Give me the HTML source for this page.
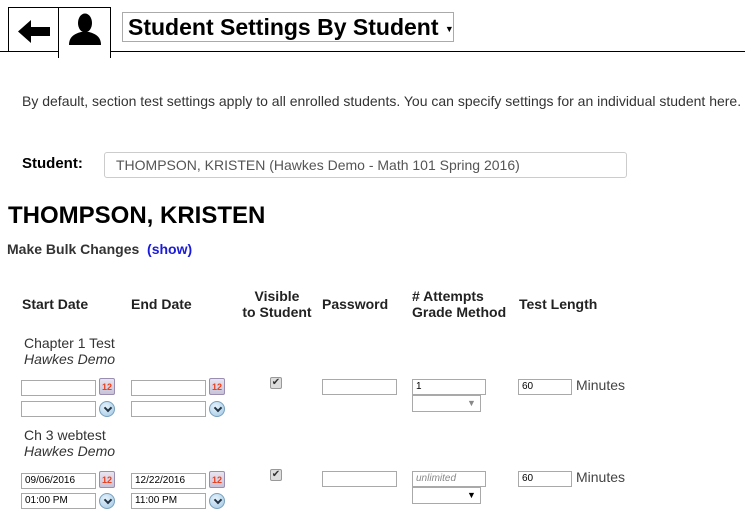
<!DOCTYPE html>
<html><head><style>
*{margin:0;padding:0;box-sizing:border-box}
body{width:745px;height:515px;background:#fff;font-family:"Liberation Sans",Arial,sans-serif;color:#222;position:relative;overflow:hidden}
.a{position:absolute;white-space:nowrap}
.in{position:absolute;border:1px solid #a9a9a9;background:#fff;height:16px;font-size:10px;padding:1px 3px;line-height:12px;color:#000}
.sel{position:absolute;border:1px solid #a9a9a9;background:#fff;height:17px}
.cal{position:absolute;width:16px;height:17px;border:1px solid #9a8fb0;border-radius:2px;background:linear-gradient(#e8e4f0,#c9c2d8);font-size:9px;font-weight:bold;color:#e8401c;text-align:center;line-height:17px}
.clk{position:absolute;width:16px;height:16px;border-radius:50%;background:radial-gradient(circle at 40% 35%,#e8f4fc,#9cc6e4);border:1px solid #7aa0bd}
.clk:after{content:"";position:absolute;left:5px;top:3px;width:4px;height:4px;border-right:2px solid #234;border-bottom:2px solid #234;transform:rotate(45deg)}
.cb{position:absolute;width:12px;height:12px;border:1px solid #999;border-radius:2px;background:#ddd;font-size:10px;line-height:10px;text-align:center;color:#333}
.h{font-weight:bold;font-size:14px;color:#222}
</style></head><body>
<div class="a" style="left:0;top:51px;width:745px;height:1px;background:#000"></div>
<div class="a" style="left:8px;top:7px;width:51px;height:44px;border:1px solid #000;border-bottom:none;background:#fff"></div>
<svg class="a" style="left:18px;top:19px" width="32" height="25" viewBox="0 0 32 25"><path d="M0 12.5 L13 1 L13 8 L32 8 L32 17 L13 17 L13 24 Z" fill="#000"/></svg>
<div class="a" style="left:58px;top:7px;width:53px;height:51px;border:1px solid #000;border-bottom:none;background:#fff"></div>
<svg class="a" style="left:68px;top:13px" width="34" height="32" viewBox="0 0 34 32"><ellipse cx="17" cy="10" rx="7" ry="9.5" fill="#000"/><path d="M1 32 C1 24 6 21 13 19 L21 19 C28 21 33 24 33 32 Z" fill="#000"/></svg>
<div class="a" style="left:122px;top:12px;width:332px;height:30px;border:1px solid #aaa;font-size:23px;font-weight:bold;color:#000;padding:1px 0 0 5px">Student Settings By Student <span style="font-size:9px;vertical-align:middle">▼</span></div>
<div class="a" style="left:22px;top:93px;font-size:14px;color:#333">By default, section test settings apply to all enrolled students. You can specify settings for an individual student here.</div>
<div class="a" style="left:22px;top:155px;font-size:15px;font-weight:bold;color:#000">Student:</div>
<div class="a" style="left:104px;top:152px;width:523px;height:26px;border:1px solid #ccc;border-radius:3px;font-size:14px;color:#555;padding:4px 0 0 11px">THOMPSON, KRISTEN (Hawkes Demo - Math 101 Spring 2016)</div>
<div class="a" style="left:8px;top:202px;font-size:24px;font-weight:bold;color:#000">THOMPSON, KRISTEN</div>
<div class="a" style="left:7px;top:241px;font-size:14px;font-weight:bold;color:#333">Make Bulk Changes &nbsp;<span style="color:#1a1adb">(show)</span></div>
<div class="a h" style="left:22px;top:296px">Start Date</div>
<div class="a h" style="left:131px;top:296px">End Date</div>
<div class="a h" style="left:240px;top:288px;width:74px;text-align:center;line-height:16px">Visible<br>to Student</div>
<div class="a h" style="left:322px;top:296px">Password</div>
<div class="a h" style="left:412px;top:288px;line-height:16px"># Attempts<br>Grade Method</div>
<div class="a h" style="left:519px;top:296px">Test Length</div>

<div class="a" style="left:24px;top:335px;font-size:14px;color:#333;line-height:16px">Chapter 1 Test<br><i>Hawkes Demo</i></div>
<div class="in" style="left:21px;top:380px;width:75px"></div><div class="cal" style="left:99px;top:378px">12</div>
<div class="in" style="left:21px;top:401px;width:75px"></div><div class="clk" style="left:99px;top:401px"></div>
<div class="in" style="left:131px;top:380px;width:75px"></div><div class="cal" style="left:209px;top:378px">12</div>
<div class="in" style="left:131px;top:401px;width:75px"></div><div class="clk" style="left:209px;top:401px"></div>
<div class="cb" style="left:270px;top:377px">✔</div>
<div class="in" style="left:322px;top:379px;width:75px"></div>
<div class="in" style="left:412px;top:379px;width:74px">1</div>
<div class="sel" style="left:412px;top:395px;width:69px"><span class="a" style="left:54px;top:2px;font-size:9px;color:#888">▼</span></div>
<div class="in" style="left:518px;top:379px;width:54px">60</div>
<div class="a" style="left:576px;top:377px;font-size:14px;color:#444">Minutes</div>

<div class="a" style="left:24px;top:427px;font-size:14px;color:#333;line-height:16px">Ch 3 webtest<br><i>Hawkes Demo</i></div>
<div class="in" style="left:21px;top:473px;width:75px">09/06/2016</div><div class="cal" style="left:99px;top:471px">12</div>
<div class="in" style="left:21px;top:493px;width:75px">01:00 PM</div><div class="clk" style="left:99px;top:493px"></div>
<div class="in" style="left:131px;top:473px;width:75px">12/22/2016</div><div class="cal" style="left:209px;top:471px">12</div>
<div class="in" style="left:131px;top:493px;width:75px">11:00 PM</div><div class="clk" style="left:209px;top:493px"></div>
<div class="cb" style="left:270px;top:469px">✔</div>
<div class="in" style="left:322px;top:471px;width:75px"></div>
<div class="in" style="left:412px;top:471px;width:74px;color:#888;font-style:italic">unlimited</div>
<div class="sel" style="left:412px;top:487px;width:69px"><span class="a" style="left:54px;top:2px;font-size:9px;color:#000">▼</span></div>
<div class="in" style="left:518px;top:471px;width:54px">60</div>
<div class="a" style="left:576px;top:469px;font-size:14px;color:#444">Minutes</div>
</body></html>
